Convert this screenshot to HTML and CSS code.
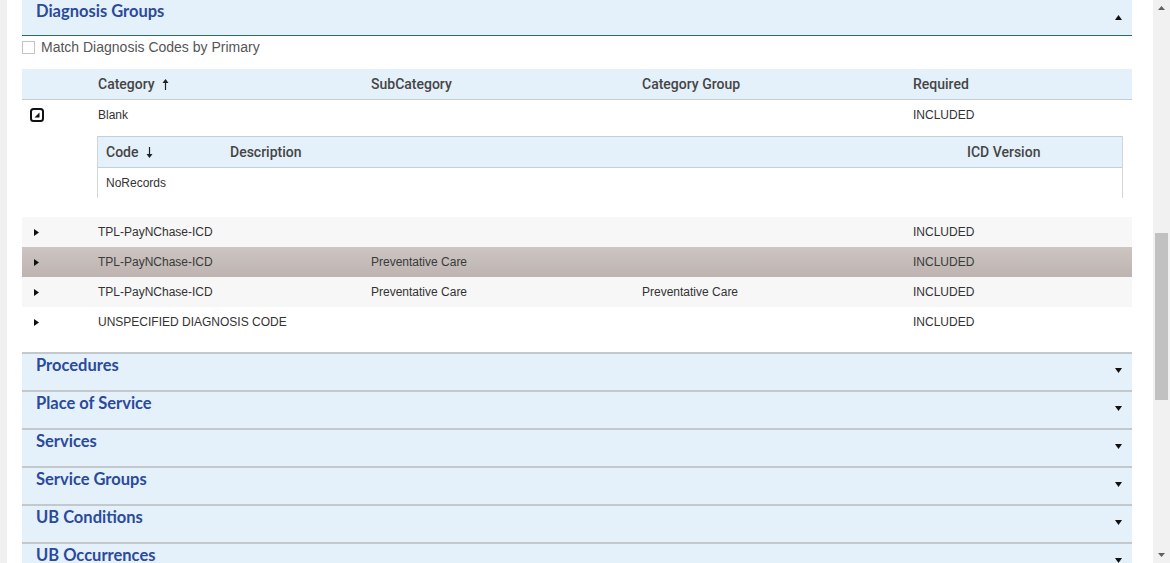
FILE: index.html
```html
<!DOCTYPE html>
<html>
<head>
<meta charset="utf-8">
<link rel="stylesheet" href="styles.css">
</head>
<body>
<div class="gutter"></div>
<div class="main">
  <div class="section-head open">
    <span class="title">Diagnosis Groups</span>
    <svg class="caret" width="7" height="5" viewBox="0 0 7 5"><polygon points="0,5 3.5,0 7,5" fill="#111"/></svg>
  </div>
  <label class="match"><span class="checkbox"></span>Match Diagnosis Codes by Primary</label>

  <div class="grid">
    <div class="row head">
      <div class="cell"></div>
      <div class="cell">Category <svg class="sort" width="7" height="11" viewBox="0 0 7 11"><path d="M3.5 1V11" stroke="#222" stroke-width="1.2"/><polygon points="0.5,4 3.5,0 6.5,4" fill="#222"/></svg></div>
      <div class="cell">SubCategory</div>
      <div class="cell">Category Group</div>
      <div class="cell">Required</div>
    </div>
    <div class="row">
      <div class="cell toggle"><svg width="14" height="14" viewBox="0 0 14 14"><rect x="1" y="1" width="12" height="12" rx="2.5" fill="none" stroke="#111" stroke-width="2"/><polygon points="4.5,9.5 9.5,4.5 9.5,9.5" fill="#111"/></svg></div>
      <div class="cell">Blank</div>
      <div class="cell"></div>
      <div class="cell"></div>
      <div class="cell">INCLUDED</div>
    </div>
    <div class="detail">
      <div class="sub">
        <div class="subrow subhead">
          <div class="cell">Code <svg class="sort" width="7" height="11" viewBox="0 0 7 11"><path d="M3.5 0V10" stroke="#222" stroke-width="1.2"/><polygon points="0.5,7 3.5,11 6.5,7" fill="#222"/></svg></div>
          <div class="cell">Description</div>
          <div class="cell">ICD Version</div>
        </div>
        <div class="subrow">
          <div class="cell">NoRecords</div>
          <div class="cell"></div>
          <div class="cell"></div>
        </div>
      </div>
    </div>
    <div class="row alt">
      <div class="cell toggle"><svg width="5" height="7" viewBox="0 0 5 7"><polygon points="0,0 5,3.5 0,7" fill="#111"/></svg></div>
      <div class="cell">TPL-PayNChase-ICD</div>
      <div class="cell"></div>
      <div class="cell"></div>
      <div class="cell">INCLUDED</div>
    </div>
    <div class="row selected">
      <div class="cell toggle"><svg width="5" height="7" viewBox="0 0 5 7"><polygon points="0,0 5,3.5 0,7" fill="#111"/></svg></div>
      <div class="cell">TPL-PayNChase-ICD</div>
      <div class="cell">Preventative Care</div>
      <div class="cell"></div>
      <div class="cell">INCLUDED</div>
    </div>
    <div class="row alt">
      <div class="cell toggle"><svg width="5" height="7" viewBox="0 0 5 7"><polygon points="0,0 5,3.5 0,7" fill="#111"/></svg></div>
      <div class="cell">TPL-PayNChase-ICD</div>
      <div class="cell">Preventative Care</div>
      <div class="cell">Preventative Care</div>
      <div class="cell">INCLUDED</div>
    </div>
    <div class="row">
      <div class="cell toggle"><svg width="5" height="7" viewBox="0 0 5 7"><polygon points="0,0 5,3.5 0,7" fill="#111"/></svg></div>
      <div class="cell">UNSPECIFIED DIAGNOSIS CODE</div>
      <div class="cell"></div>
      <div class="cell"></div>
      <div class="cell">INCLUDED</div>
    </div>
  </div>

  <div class="sections">
    <div class="section-head"><span class="title">Procedures</span><svg class="caret" width="7" height="5" viewBox="0 0 7 5"><polygon points="0,0 7,0 3.5,5" fill="#111"/></svg></div>
    <div class="section-head"><span class="title">Place of Service</span><svg class="caret" width="7" height="5" viewBox="0 0 7 5"><polygon points="0,0 7,0 3.5,5" fill="#111"/></svg></div>
    <div class="section-head"><span class="title">Services</span><svg class="caret" width="7" height="5" viewBox="0 0 7 5"><polygon points="0,0 7,0 3.5,5" fill="#111"/></svg></div>
    <div class="section-head"><span class="title">Service Groups</span><svg class="caret" width="7" height="5" viewBox="0 0 7 5"><polygon points="0,0 7,0 3.5,5" fill="#111"/></svg></div>
    <div class="section-head"><span class="title">UB Conditions</span><svg class="caret" width="7" height="5" viewBox="0 0 7 5"><polygon points="0,0 7,0 3.5,5" fill="#111"/></svg></div>
    <div class="section-head"><span class="title">UB Occurrences</span><svg class="caret" width="7" height="5" viewBox="0 0 7 5"><polygon points="0,0 7,0 3.5,5" fill="#111"/></svg></div>
  </div>
</div>
<div class="scrollbar">
  <svg class="sb-arrow" width="17" height="17" viewBox="0 0 17 17"><polygon points="5,10 8.5,6 12,10" fill="#606060"/></svg>
  <div class="thumb"></div>
  <svg class="sb-arrow bottom" width="17" height="17" viewBox="0 0 17 17"><polygon points="5,7 12,7 8.5,11" fill="#606060"/></svg>
</div>
</body>
</html>
```

FILE: styles.css
```css
html, body {
  margin: 0;
  padding: 0;
  height: 563px;
  overflow: hidden;
  background: #fff;
}
body {
  display: flex;
  font-family: "Liberation Sans", Arial, sans-serif;
  color: #333;
}
.gutter {
  width: 7px;
  flex: none;
  background: #f0f0f0;
}
.main {
  flex: 1;
  padding: 0 21px 0 15px;
  min-width: 0;
}
.section-head {
  display: flex;
  justify-content: space-between;
  align-items: flex-start;
  height: 36px;
  padding: 0 10px 0 14px;
  background: #e4f1fb;
  border-top: 2px solid #c3c8cc;
}
.section-head.open {
  height: 35px;
  border-top: none;
  border-bottom: 1px solid #2d6e62;
}
.title {
  font-family: Lato, "Open Sans", sans-serif;
  font-weight: 700;
  font-size: 16.5px;
  line-height: 20px;
  padding-top: 1px;
  color: #2b4a9b;
}
.caret {
  margin-top: 15px;
}
.section-head:not(.open) .caret {
  margin-top: 14px;
}
.match {
  display: flex;
  align-items: center;
  height: 22px;
  margin-bottom: 11px;
  font-size: 14px;
  color: #555;
}
.checkbox {
  width: 11px;
  height: 11px;
  border: 1px solid #c4c4c4;
  background: #fff;
  margin-right: 6px;
}
.row {
  display: grid;
  grid-template-columns: 68px 273px 271px 271px 1fr;
  height: 30px;
  align-items: center;
  font-size: 12px;
  color: #333;
}
.row .cell, .subrow .cell {
  padding-left: 8px;
  white-space: nowrap;
}
.row.head {
  background: #e4f1fb;
  border-bottom: 1px solid #c4ccd4;
  font-family: Roboto, "Open Sans", sans-serif;
  font-weight: 500;
  font-size: 14px;
  color: #454545;
}
.sort {
  margin-left: 4px;
  vertical-align: -1px;
}
.row .toggle {
  padding-left: 8px;
  display: flex;
  align-items: center;
}
.row .toggle svg[width="5"] {
  margin-left: 4px;
}
.row.alt {
  background: #f7f7f7;
}
.row.selected {
  background: linear-gradient(#cdc5c2, #bdb4b1);
  color: #3a3a3a;
}
.detail {
  padding: 6px 9px 19px 75px;
}
.sub {
  border-left: 1px solid #d0d6dc;
  border-right: 1px solid #d0d6dc;
}
.subrow {
  display: grid;
  grid-template-columns: 124px 737px 1fr;
  height: 30px;
  align-items: center;
  font-size: 12px;
  color: #333;
}
.subrow.subhead {
  background: #e4f1fb;
  border-top: 1px solid #c6ced6;
  border-bottom: 1px solid #c6ced6;
  font-family: Roboto, "Open Sans", sans-serif;
  font-weight: 500;
  font-size: 14px;
  color: #454545;
}
.sections {
  margin-top: 15px;
}
.scrollbar {
  width: 17px;
  flex: none;
  background: #f1f1f1;
  display: flex;
  flex-direction: column;
}
.thumb {
  margin: 216px 0 0 2px;
  width: 13px;
  height: 167px;
  background: #c1c1c1;
}
.sb-arrow.bottom {
  margin-top: auto;
}
```
